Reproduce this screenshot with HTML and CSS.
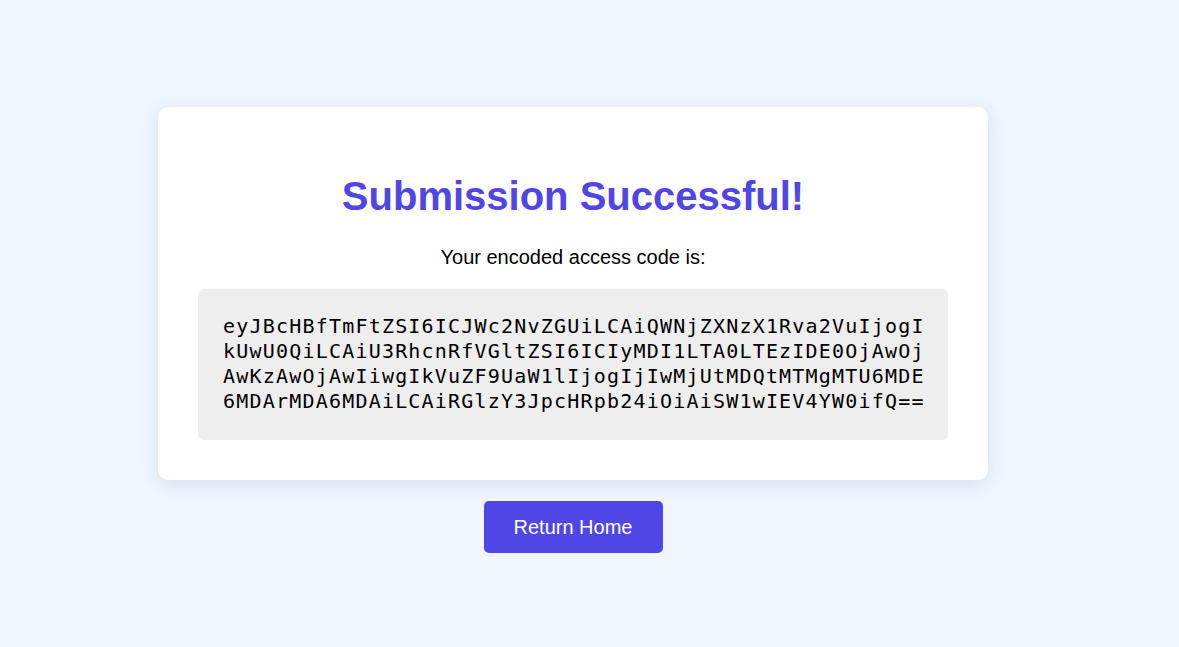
FILE: index.html
```html
<!DOCTYPE html>
<html lang="en">
<head>
<meta charset="utf-8">
<title>Submission Successful</title>
<link rel="stylesheet" href="styles.css">
</head>
<body>
<main class="page">
  <section class="card">
    <h1 class="title">Submission Successful!</h1>
    <p class="subtitle">Your encoded access code is:</p>
    <div class="code">eyJBcHBfTmFtZSI6ICJWc2NvZGUiLCAiQWNjZXNzX1Rva2VuIjogI<br>kUwU0QiLCAiU3RhcnRfVGltZSI6ICIyMDI1LTA0LTEzIDE0OjAwOj<br>AwKzAwOjAwIiwgIkVuZF9UaW1lIjogIjIwMjUtMDQtMTMgMTU6MDE<br>6MDArMDA6MDAiLCAiRGlzY3JpcHRpb24iOiAiSW1wIEV4YW0ifQ==</div>
  </section>
  <a class="home-btn" href="#">Return Home</a>
</main>
</body>
</html>
```
FILE: styles.css
```css
html, body {
  margin: 0;
  padding: 0;
}
body {
  background: #eff6ff;
  font-family: "Liberation Sans", Arial, sans-serif;
  color: #000;
  min-height: 100vh;
}
.page {
  display: flex;
  flex-direction: column;
  align-items: center;
  padding: 107px 33px 0 0;
}
.card {
  width: 830px;
  box-sizing: border-box;
  background: #ffffff;
  border-radius: 10px;
  box-shadow: 0 4px 18px rgba(30, 60, 120, 0.12);
  padding: 40px;
  text-align: center;
}
.title {
  margin: 26px 0 27px;
  font-size: 40px;
  font-weight: 700;
  line-height: 46px;
  color: #4f46e5;
}
.subtitle {
  margin: 0 0 20px;
  font-size: 20px;
  line-height: 23px;
  color: #000;
}
.code {
  background: #eeeeee;
  border-radius: 6px;
  padding: 25px 25px 26px;
  text-align: left;
  font-family: "DejaVu Sans Mono", "Liberation Mono", monospace;
  font-size: 20px;
  letter-spacing: 1.2px;
  line-height: 25px;
  white-space: nowrap;
  overflow: hidden;
  color: #000;
}
.home-btn {
  margin-top: 21px;
  display: flex;
  align-items: center;
  justify-content: center;
  width: 179px;
  height: 52px;
  box-sizing: border-box;
  background: #4f46e5;
  color: #ffffff;
  border-radius: 5px;
  font-size: 20px;
  text-decoration: none;
}
```
